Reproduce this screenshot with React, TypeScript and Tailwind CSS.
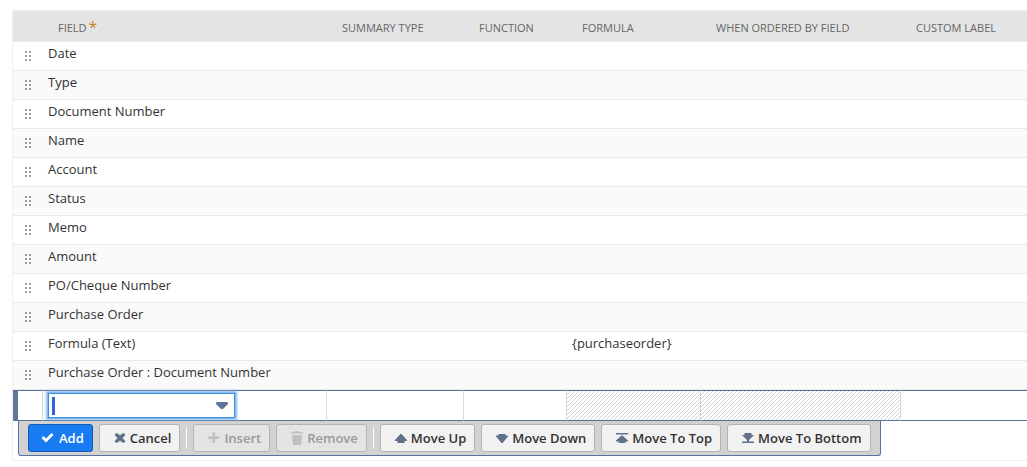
import { useState } from 'react';
import type { ReactNode } from 'react';
import { clsx } from 'clsx';

interface FieldRow {
  field: string;
  formula?: string;
}

const ROWS: FieldRow[] = [
  { field: 'Date' },
  { field: 'Type' },
  { field: 'Document Number' },
  { field: 'Name' },
  { field: 'Account' },
  { field: 'Status' },
  { field: 'Memo' },
  { field: 'Amount' },
  { field: 'PO/Cheque Number' },
  { field: 'Purchase Order' },
  { field: 'Formula (Text)', formula: '{purchaseorder}' },
  { field: 'Purchase Order : Document Number' },
];

const COLUMNS = ['Summary Type', 'Function', 'Formula', 'When Ordered By Field', 'Custom Label'];

function DragHandle() {
  return (
    <svg width="6" height="10" shapeRendering="crispEdges" fill="#999999" aria-hidden="true">
      {[0, 4, 8].map((y) => (
        <g key={y}>
          <rect x="0" y={y} width="2" height="2" />
          <rect x="4" y={y} width="2" height="2" />
        </g>
      ))}
    </svg>
  );
}

function Hatch({ id }: { id: string }) {
  return (
    <svg className="block h-[29px] w-full" shapeRendering="crispEdges" aria-hidden="true">
      <defs>
        <pattern id={id} width="4" height="4" patternUnits="userSpaceOnUse">
          <rect width="4" height="4" fill="#ffffff" />
          <path d="M3 0h1v1h-1zM2 1h1v1h-1zM1 2h1v1h-1zM0 3h1v1h-1z" fill="#d2d2d2" />
        </pattern>
      </defs>
      <rect width="100%" height="100%" fill={`url(#${id})`} />
    </svg>
  );
}

function Icon({ children }: { children: ReactNode }) {
  return (
    <svg width="14" height="14" viewBox="0 0 14 14" fill="currentColor" aria-hidden="true">
      {children}
    </svg>
  );
}

const ICONS = {
  check: <path d="M0.500 7 2.500 5 5 7.500 10.500 2 12.500 4 5 11.500z" />,
  cross: <path d="M3 2.500h3l2 2 2-2h3v2L10.500 7 13 9.500v2h-3l-2-2-2 2H3v-2L5.500 7 3 4.500z" />,
  plus: <path d="M6.500 1.500h2.500V5.500h4V8H9v4H6.500V8H2V5.500h4.500z" />,
  trash: <path d="M2 1h4V0h4v1h4v1.500H2zM3 4h10l-1 10H4z" />,
  up: <path d="M7.500 3h1L14 9v1h-2.500v2h-7v-2H2V9z" />,
  down: <path d="M4.500 3h7v1.500H14v1L8.500 12h-1L2 5.500v-1h2.500z" />,
  top: <path d="M2 2h12v1.500H2zM7.500 4.500h1L14 9.500v1h-2.500V12h-7v-1.500H2v-1z" />,
  bottom: <path d="M4.500 2h7v2H14L9 9v1.500h5V12H2v-1.500h5V9L2 4h2.500z" />,
};

interface ToolButtonProps {
  icon: keyof typeof ICONS;
  label: string;
  primary?: boolean;
  disabled?: boolean;
}

function ToolButton({ icon, label, primary, disabled }: ToolButtonProps) {
  return (
    <button
      type="button"
      disabled={disabled}
      className={clsx(
        'flex h-7 items-center gap-1 rounded-[3px] border pr-2 pl-3 text-[13px] font-semibold whitespace-nowrap',
        primary && 'border-[#125ab2] bg-[#187bf2] text-white',
        disabled && 'border-[#b3b3b3] bg-[#e4e4e4] text-[#999999]',
        !primary && !disabled && 'border-[#b3b3b3] bg-[#f2f2f2] text-[#333333]',
      )}
    >
      <span className={clsx(primary ? 'text-white' : disabled ? 'text-[#c0c0c0]' : 'text-[#607189]')}>
        <Icon>{ICONS[icon]}</Icon>
      </span>
      <span className="pt-[2px]">{label}</span>
    </button>
  );
}

function Divider() {
  return <span className="h-[22px] w-px bg-white" />;
}

export default function App() {
  const [field, setField] = useState('');
  const editCell = 'h-[31px] border-y border-y-[#5872a0] border-r border-r-[#d9d9d9] p-0';

  return (
    <div className="overflow-hidden bg-white pt-[10px] pl-3 font-['Open_Sans',sans-serif] text-[13px] text-[#333333]">
      <div className="border-y border-l border-[#eeeeee] pb-1">
        <table className="w-full table-fixed border-separate border-spacing-0">
          <colgroup>
            <col className="w-[30px]" />
            <col className="w-[284px]" />
            <col className="w-[137px]" />
            <col className="w-[103px]" />
            <col className="w-[134px]" />
            <col className="w-[200px]" />
            <col />
          </colgroup>
          <thead>
            <tr className="bg-[#e4e4e4] text-left text-[11px] text-[#666666] uppercase">
              <th className="h-[31px] border-b border-[#ebebeb] p-0" />
              <th className="border-b border-[#ebebeb] p-0 pt-1 pl-[15px] font-normal">
                <span className="flex items-center gap-[2px]">
                  Field
                  <span className="h-4 text-base leading-[14px] text-[#c7841a]">*</span>
                </span>
              </th>
              {COLUMNS.map((column) => (
                <th key={column} className="border-b border-[#ebebeb] p-0 pt-1 pl-[15px] font-normal">
                  {column}
                </th>
              ))}
            </tr>
          </thead>
          <tbody>
            {ROWS.map((row) => (
              <tr key={row.field} className="even:bg-[#fafafa] [&>td]:border-b [&>td]:border-[#e8e8e8]">
                <td className="h-[29px] p-0 pt-[9px] pl-3 align-top">
                  <DragHandle />
                </td>
                <td className="p-0 pt-[2px] pl-[5px] align-top">{row.field}</td>
                <td />
                <td />
                <td className="p-0 pt-[2px] pl-[5px] align-top">{row.formula}</td>
                <td />
                <td />
              </tr>
            ))}
            <tr>
              <td className={clsx(editCell, 'border-l-[5px] border-l-[#607799]')} />
              <td className={clsx(editCell, 'pl-[5px]')}>
                <div className="relative flex h-[25px] w-[187px] items-center border border-[#3b8ede] bg-white shadow-[0_0_2px_2px_#84b8ee]">
                  <input
                    type="text"
                    aria-label="Field"
                    value={field}
                    onChange={(e) => setField(e.target.value)}
                    className="h-full w-full bg-transparent pr-6 pl-2 outline-none"
                  />
                  <span className="absolute top-[3px] left-[3px] h-[18px] w-[3px] bg-[#3366d6]" />
                  <svg className="absolute top-2 right-[6px]" width="12" height="8" viewBox="0 0 12 8" fill="#607799">
                    <path d="M1 0h10l1 1v1L7 7H5L0 2V1z" />
                  </svg>
                </div>
              </td>
              <td className={editCell} />
              <td className={editCell} />
              <td className={editCell}>
                <Hatch id="hatch-formula" />
              </td>
              <td className={editCell}>
                <Hatch id="hatch-ordered" />
              </td>
              <td className={clsx(editCell, 'border-r-0')} />
            </tr>
          </tbody>
        </table>
        <div className="ml-[5px] flex w-max items-center gap-[6px] rounded-b-[3px] border border-t-0 border-[#5872a0] bg-[#d2d2d2] px-[9px] py-[3px]">
          <ToolButton icon="check" label="Add" primary />
          <ToolButton icon="cross" label="Cancel" />
          <Divider />
          <ToolButton icon="plus" label="Insert" disabled />
          <ToolButton icon="trash" label="Remove" disabled />
          <Divider />
          <ToolButton icon="up" label="Move Up" />
          <ToolButton icon="down" label="Move Down" />
          <ToolButton icon="top" label="Move To Top" />
          <ToolButton icon="bottom" label="Move To Bottom" />
        </div>
      </div>
    </div>
  );
}
